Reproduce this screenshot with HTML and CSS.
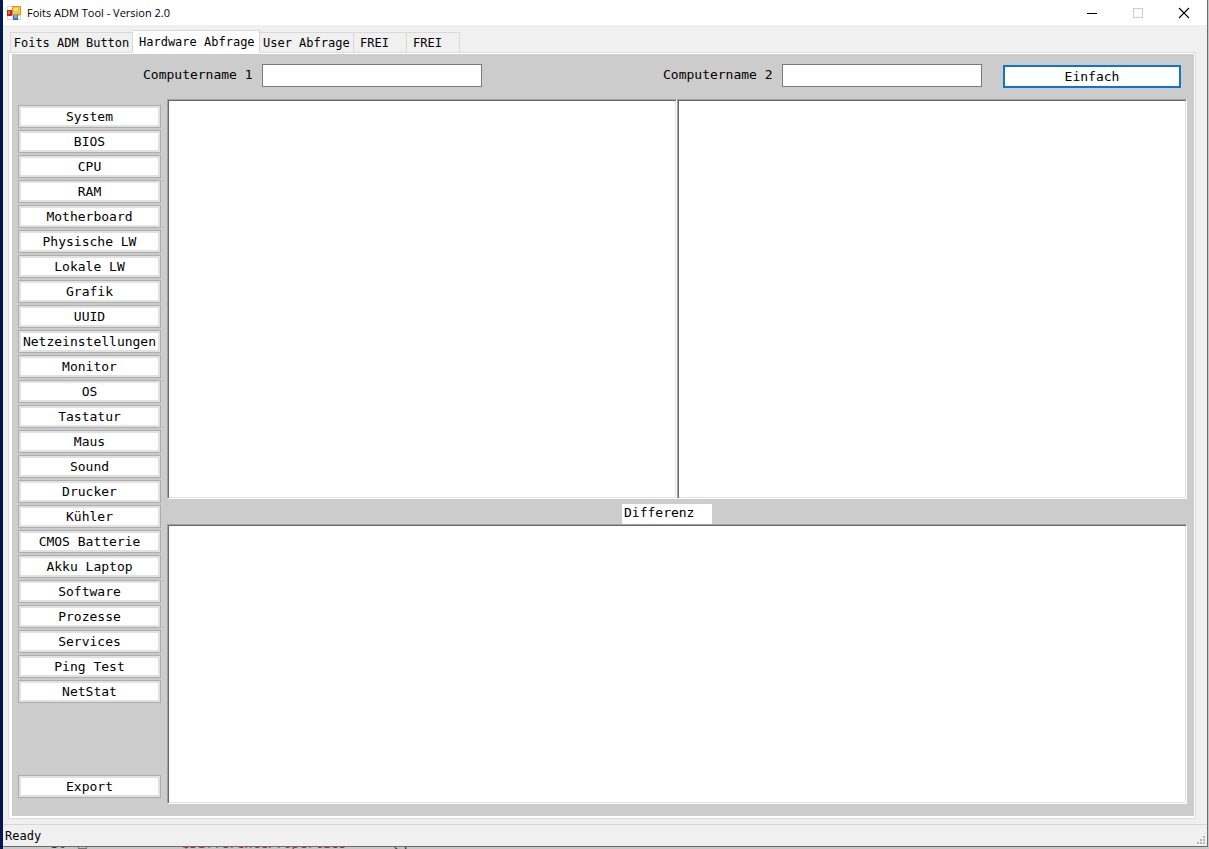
FILE: index.html
```
<!DOCTYPE html>
<html lang="de">
<head>
<meta charset="utf-8">
<title>Foits ADM Tool - Version 2.0</title>
<link rel="stylesheet" href="styles.css">
</head>
<body class="desktop">
<div class="window">
  <header class="titlebar">
    <svg class="app-icon" width="14" height="14" viewBox="0 0 14 14" aria-hidden="true">
      <rect x="0" y="0" width="14" height="14" fill="#d8d8dc"/>
      <rect x="1" y="1" width="4" height="3" fill="#fff"/>
      <rect x="1" y="10" width="4" height="3" fill="#fff"/>
      <rect x="11" y="10" width="2" height="3" fill="#fff"/>
      <rect x="0" y="4" width="5" height="6" fill="#b52a22"/>
      <rect x="1" y="5" width="2" height="3" fill="#ee6a5c"/>
      <rect x="5" y="0" width="9" height="9" fill="#d39a1c"/>
      <rect x="6" y="1" width="7" height="7" fill="#fbc63c"/>
      <rect x="7" y="2" width="4" height="3" fill="#ffe27a"/>
      <rect x="6" y="9" width="5" height="5" fill="#3f6fc4"/>
      <rect x="7" y="9" width="3" height="3" fill="#7fa6ec"/>
    </svg>
    <h1 class="title">Foits ADM Tool - Version 2.0</h1>
    <button class="caption" aria-label="Minimieren"><svg width="12" height="12" viewBox="0 0 12 12"><path d="M1 6.500H11" stroke="#000" fill="none"/></svg></button>
    <button class="caption" aria-label="Maximieren" disabled><svg width="12" height="12" viewBox="0 0 12 12"><rect x="1.500" y="1.500" width="9" height="9" stroke="#ccc" fill="none"/></svg></button>
    <button class="caption" aria-label="Schließen"><svg width="12" height="12" viewBox="0 0 12 12"><path d="M1 1L11 11M11 1L1 11" stroke="#000" stroke-width="1.100" fill="none"/></svg></button>
  </header>

  <nav class="tabs" role="tablist">
    <button class="tab tab-wide" role="tab">Foits ADM Button</button>
    <button class="tab tab-active" role="tab" aria-selected="true">Hardware Abfrage</button>
    <button class="tab tab-user" role="tab">User Abfrage</button>
    <button class="tab tab-free" role="tab">FREI</button>
    <button class="tab tab-free" role="tab">FREI</button>
  </nav>

  <main class="page">
    <div class="panel">
      <form class="query">
        <label class="query-label" for="pc1">Computername 1</label>
        <input class="field field-first" id="pc1" type="text">
        <label class="query-label query-second" for="pc2">Computername 2</label>
        <input class="field field-second" id="pc2" type="text">
        <button class="button button-default" type="button">Einfach</button>
      </form>
      <div class="body">
        <div class="sidebar">
          <button class="button">System</button>
          <button class="button">BIOS</button>
          <button class="button">CPU</button>
          <button class="button">RAM</button>
          <button class="button">Motherboard</button>
          <button class="button">Physische LW</button>
          <button class="button">Lokale LW</button>
          <button class="button">Grafik</button>
          <button class="button">UUID</button>
          <button class="button">Netzeinstellungen</button>
          <button class="button">Monitor</button>
          <button class="button">OS</button>
          <button class="button">Tastatur</button>
          <button class="button">Maus</button>
          <button class="button">Sound</button>
          <button class="button">Drucker</button>
          <button class="button">Kühler</button>
          <button class="button">CMOS Batterie</button>
          <button class="button">Akku Laptop</button>
          <button class="button">Software</button>
          <button class="button">Prozesse</button>
          <button class="button">Services</button>
          <button class="button">Ping Test</button>
          <button class="button">NetStat</button>
          <button class="button button-export">Export</button>
        </div>
        <div class="results">
          <textarea class="output" aria-label="Ergebnis Computer 1"></textarea>
          <textarea class="output" aria-label="Ergebnis Computer 2"></textarea>
          <label class="diff-label" for="diff">Differenz</label>
          <textarea class="output output-diff" id="diff"></textarea>
        </div>
      </div>
    </div>
  </main>

  <footer class="status">
    <span>Ready</span>
    <svg class="grip" width="9" height="9" viewBox="0 0 9 9" fill="#b8b8b8" aria-hidden="true">
      <path d="M6 0h2v2h-2zM3 3h2v2h-2zM6 3h2v2h-2zM0 6h2v2h-2zM3 6h2v2h-2zM6 6h2v2h-2z"/>
    </svg>
  </footer>
</div>
<div class="editor" aria-hidden="true">
  <span class="line-number">30</span><span class="fold"></span><span class="variable">$DifferenceProperties</span><span>= @{</span>
</div>
</body>
</html>
```

FILE: styles.css
```
* {
  box-sizing: border-box;
}

.desktop {
  display: flex;
  flex-direction: column;
  height: 100vh;
  margin: 0;
  padding-left: 3px;
  overflow: hidden;
  background: #001a50;
  color: #000;
  font-family: "DejaVu Sans Mono", monospace;
  font-size: 12px;
}

button,
input,
textarea {
  margin: 0;
  border-radius: 0;
  color: inherit;
  font: inherit;
}

.window {
  display: flex;
  flex: 1;
  flex-direction: column;
  min-height: 0;
  margin-right: 1px;
  border-right: 1px solid #6b6b6b;
  border-bottom: 1px solid #6b6b6b;
  background: #f0f0f0;
  box-shadow: 1px 0 #c8c8c8;
}

.titlebar {
  display: flex;
  align-items: center;
  height: 25px;
  padding-left: 4px;
  background: #fff;
}

.title {
  flex: 1;
  margin: 0 0 0 6px;
  font: 11px/24px "Open Sans", sans-serif;
}

.caption {
  display: flex;
  align-items: center;
  justify-content: center;
  width: 46px;
  height: 24px;
  padding: 0;
  border: 0;
  background: none;
}

.tabs {
  display: flex;
  align-items: flex-end;
  height: 27px;
  padding-left: 7px;
}

.tab {
  height: 20px;
  padding: 0 0 0 6px;
  border: 1px solid #d9d9d9;
  border-width: 1px 1px 0 0;
  background: #f0f0f0;
  line-height: 20px;
  text-align: left;
  white-space: nowrap;
}

.tab-wide {
  width: 123px;
  padding: 0;
  border-left-width: 1px;
  text-align: center;
}

.tab-active {
  z-index: 1;
  width: 127px;
  height: 23px;
  margin-bottom: -1px;
  background: #fff;
}

.tab-user {
  width: 94px;
  padding-left: 3px;
}

.tab-free {
  width: 53px;
}

.page {
  display: flex;
  flex: 1;
  min-height: 0;
  margin: 0 11px 5px 5px;
  padding: 1px 1px 2px 3px;
  border: 1px solid #dcdcdc;
  background: #fff;
}

.panel {
  display: flex;
  flex: 1;
  flex-direction: column;
  min-width: 0;
  padding: 0 7px 12px 6px;
  background: #ccc;
  font-size: 13px;
}

.query {
  display: flex;
  align-items: flex-start;
  height: 45px;
  padding: 10px 6px 0 125px;
}

.query-label {
  flex: none;
  width: 119px;
  line-height: 22px;
}

.query-second {
  margin-left: auto;
}

.field {
  height: 23px;
  padding: 0 3px;
  border: 1px solid #7a7a7a;
  background: #fff;
}

.field-first {
  width: 220px;
}

.field-second {
  width: 200px;
}

.body {
  display: flex;
  flex: 1;
  gap: 6px;
  min-height: 0;
}

.sidebar {
  display: flex;
  flex: none;
  flex-direction: column;
  gap: 2px;
  width: 143px;
  padding: 6px 0;
}

.button {
  flex: none;
  height: 23px;
  padding: 0;
  border: 1px solid #adadad;
  background: #fff;
  box-shadow: inset 0 0 0 2px #e1e1e1;
  line-height: 20px;
  text-align: center;
  white-space: nowrap;
}

.button-default {
  width: 178px;
  margin: 1px 0 0 21px;
  border: 2px solid #0f74cc;
  box-shadow: none;
  line-height: 18px;
}

.button-export {
  margin-top: auto;
}

.results {
  display: grid;
  flex: 1;
  grid-template-rows: 10fr auto 7fr;
  grid-template-columns: 1fr 1fr;
  min-width: 0;
}

.output {
  width: 100%;
  height: 100%;
  min-width: 0;
  min-height: 0;
  padding: 3px;
  border: 1px solid;
  border-color: #a0a0a0 #fff #fff #a0a0a0;
  outline: 0;
  background: #fff;
  box-shadow: inset 1px 1px #696969, inset -1px -1px #e3e3e3;
  resize: none;
}

.output-diff {
  grid-column: 1 / -1;
}

.diff-label {
  grid-column: 1 / -1;
  justify-self: center;
  width: 90px;
  height: 20px;
  margin: 5px 20px 0 0;
  padding-left: 2px;
  background: #fff;
  line-height: 17px;
}

.status {
  display: flex;
  align-items: center;
  justify-content: space-between;
  height: 22px;
  padding-left: 2px;
  border-top: 1px solid #d7d7d7;
}

.grip {
  align-self: flex-end;
  margin: 0 1px 1px 0;
}

.editor {
  display: flex;
  align-items: flex-end;
  height: 2px;
  padding-left: 48px;
  overflow: hidden;
  background: #c8c8c8;
  color: #333;
  font-size: 13px;
  line-height: 11px;
  white-space: pre;
}

.line-number {
  width: 27px;
}

.fold {
  width: 9px;
  height: 9px;
  margin-right: 95px;
  border: 1px solid #777;
}

.variable {
  width: 196px;
  color: #a03030;
}
```
